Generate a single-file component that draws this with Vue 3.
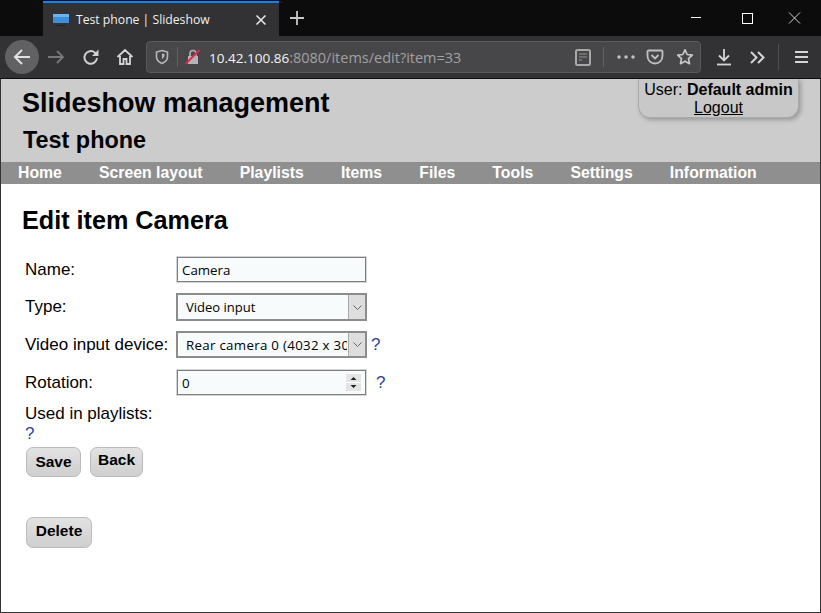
<script setup>
import { ref } from 'vue'

const navItems = ['Home', 'Screen layout', 'Playlists', 'Items', 'Files', 'Tools', 'Settings', 'Information']
const itemName = ref('Camera')
const itemType = ref('Video input')
const device = ref('Rear camera 0 (4032 x 3024)')
const rotation = ref('0')
</script>

<template>
  <div class="window">
    <div class="tabbar">
      <div class="tab">
        <svg class="favicon" width="16" height="14" viewBox="0 0 16 14">
          <rect x="0" y="1" width="16" height="9" fill="#3d8fdc" />
          <rect x="0" y="1" width="16" height="3" fill="#6cb4ee" />
          <rect x="6" y="10" width="4" height="2" fill="#333" />
          <rect x="4" y="12" width="8" height="1" fill="#222" />
        </svg>
        <span class="tab-title">Test phone | Slideshow</span>
        <svg class="tab-close" width="12" height="12" viewBox="0 0 12 12">
          <path d="M1.5 1.5l9 9M10.5 1.5l-9 9" stroke="#e4e4e4" stroke-width="1.6" fill="none" />
        </svg>
      </div>
      <svg class="new-tab" width="16" height="16" viewBox="0 0 16 16">
        <path d="M8 1v14M1 8h14" stroke="#c8c8c8" stroke-width="1.8" fill="none" />
      </svg>
      <div class="win-controls">
        <svg width="48" height="34" viewBox="0 0 48 34"><path d="M16 17.500h10" stroke="#fff" fill="none" /></svg>
        <svg width="48" height="34" viewBox="0 0 48 34"><rect x="19.500" y="13.500" width="10" height="10" stroke="#fff" fill="none" /></svg>
        <svg width="48" height="34" viewBox="0 0 48 34"><path d="M18 12.500l11 11M29 12.500l-11 11" stroke="#d0d0d0" fill="none" /></svg>
      </div>
    </div>

    <div class="toolbar">
      <div class="back-btn">
        <svg width="20" height="20" viewBox="0 0 20 20">
          <path d="M18 10H3M10 3l-7 7 7 7" stroke="#e0e0e0" stroke-width="2" fill="none" />
        </svg>
      </div>
      <svg class="forward" width="18" height="18" viewBox="0 0 18 18">
        <path d="M1 9h15M10 3l6 6-6 6" stroke="#77777a" stroke-width="1.8" fill="none" />
      </svg>
      <svg class="reload" width="18" height="18" viewBox="0 0 18 18">
        <path d="M15 10a6.300 6.300 0 1 1-2-5.200L15 7" stroke="#d0d0d0" stroke-width="2" fill="none" />
        <path d="M16.500 1.500v6.500h-6.500z" fill="#d0d0d0" />
      </svg>
      <svg class="home" width="18" height="18" viewBox="0 0 18 18">
        <path d="M1.500 9L9 2l7.500 7M4 8v8h3.500v-5h3v5H14V8" stroke="#d4d4d4" stroke-width="1.800" fill="none" />
      </svg>

      <div class="urlbar">
        <svg class="shield" width="14" height="16" viewBox="0 0 14 16">
          <path d="M7 1.500l5.500 1.500v4.500c0 3.500-2.500 5.800-5.500 7-3-1.200-5.500-3.500-5.500-7V3z" stroke="#b8b8b8" stroke-width="1.600" fill="none" />
          <path d="M7 4.500v5.500c1.500-.8 2.500-2.200 2.500-4V5z" fill="#b8b8b8" />
        </svg>
        <span class="url-sep"></span>
        <svg class="lock" width="16" height="16" viewBox="0 0 16 16">
          <path d="M3 7h10v8H3z" fill="#b4b4b4" />
          <path d="M5 7V4.500a3 3 0 0 1 6 0V7" stroke="#b4b4b4" stroke-width="1.600" fill="none" />
          <path d="M0.500 15L14.500 1" stroke="#e22850" stroke-width="1.800" fill="none" />
        </svg>
        <span class="url"><span class="url-host">10.42.100.86</span>:8080/items/edit?item=33</span>
        <svg class="reader" width="16" height="17" viewBox="0 0 16 17">
          <rect x="1" y="1" width="14" height="15" rx="1.500" stroke="#a8a8a8" stroke-width="2" fill="none" />
          <path d="M4 5h8M4 8h8M4 11h3" stroke="#7c7c7c" stroke-width="1.500" fill="none" />
        </svg>
        <span class="url-sep right"></span>
        <svg class="dots" width="18" height="4" viewBox="0 0 18 4">
          <circle cx="2" cy="2" r="1.700" fill="#c4c4c4" />
          <circle cx="9" cy="2" r="1.700" fill="#c4c4c4" />
          <circle cx="16" cy="2" r="1.700" fill="#c4c4c4" />
        </svg>
        <svg class="pocket" width="18" height="16" viewBox="0 0 18 16">
          <path d="M2.500 1.500h13a1 1 0 0 1 1 1V7a7.500 7.500 0 0 1-15 0V2.500a1 1 0 0 1 1-1z" stroke="#c0c0c0" stroke-width="1.800" fill="none" />
          <path d="M5.500 6L9 9.500 12.500 6" stroke="#c0c0c0" stroke-width="1.800" fill="none" />
        </svg>
        <svg class="star" width="18" height="18" viewBox="0 0 18 18">
          <path d="M9 1.800l2.200 4.700 5.100.6-3.800 3.500 1 5.100L9 13.200l-4.500 2.500 1-5.100L1.700 7.100l5.100-.6z" stroke="#c8c8c8" stroke-width="1.700" stroke-linejoin="round" fill="none" />
        </svg>
      </div>

      <svg class="download" width="14" height="17" viewBox="0 0 14 17">
        <path d="M7 0v11M2 6.500l5 5 5-5" stroke="#d4d4d4" stroke-width="1.800" fill="none" />
        <path d="M0 15.500h14" stroke="#d4d4d4" stroke-width="1.800" fill="none" />
      </svg>
      <svg class="chevrons" width="15" height="13" viewBox="0 0 15 13">
        <path d="M1 1l5.500 5.500L1 12M8 1l5.500 5.500L8 12" stroke="#d4d4d4" stroke-width="2" fill="none" />
      </svg>
      <span class="tool-sep"></span>
      <svg class="menu" width="13" height="12" viewBox="0 0 13 12">
        <path d="M0 1h13M0 6h13M0 11h13" stroke="#d4d4d4" stroke-width="1.800" fill="none" />
      </svg>
    </div>

    <div class="page">
      <header class="header">
        <h1>Slideshow management</h1>
        <h2>Test phone</h2>
        <div class="user-box">
          User: <b>Default admin</b><br />
          <a href="#">Logout</a>
        </div>
      </header>
      <nav class="nav">
        <a v-for="item in navItems" :key="item" href="#">{{ item }}</a>
      </nav>

      <main class="content">
        <h2 class="edit-title">Edit item Camera</h2>
        <form class="form" @submit.prevent>
          <div class="row">
            <label>Name:</label>
            <input v-model="itemName" class="field" type="text" />
          </div>
          <div class="row">
            <label>Type:</label>
            <div class="select-wrap">
              <select v-model="itemType" class="select tall">
                <option>Video input</option>
              </select>
              <span class="arrow">
                <svg width="9" height="5" viewBox="0 0 9 5"><path d="M.5.500l4 4 4-4" stroke="#666" fill="none" /></svg>
              </span>
            </div>
          </div>
          <div class="row device-row">
            <label>Video input device:</label>
            <div class="select-wrap">
              <select v-model="device" class="select wide-text">
                <option>Rear camera 0 (4032 x 3024)</option>
              </select>
              <span class="arrow">
                <svg width="9" height="5" viewBox="0 0 9 5"><path d="M.5.500l4 4 4-4" stroke="#666" fill="none" /></svg>
              </span>
            </div>
            <a class="help" href="#">?</a>
          </div>
          <div class="row">
            <label>Rotation:</label>
            <div class="select-wrap">
              <input v-model="rotation" class="field" type="text" />
              <span class="spinner">
                <svg width="15" height="17" viewBox="0 0 15 17">
                  <rect width="15" height="17" fill="#e4e4e4" />
                  <path d="M0 8.500h15" stroke="#fff" />
                  <path d="M7.500 3l3 3h-6zM7.500 14l3-3h-6z" fill="#222" />
                </svg>
              </span>
            </div>
            <a class="help rotation-help" href="#">?</a>
          </div>
          <div class="playlists">
            <div>Used in playlists:</div>
            <a class="help plain" href="#">?</a>
          </div>
          <div class="buttons">
            <button class="btn save" type="submit">Save</button>
            <button class="btn back" type="button">Back</button>
          </div>
          <button class="btn delete" type="button">Delete</button>
        </form>
      </main>
    </div>
  </div>
</template>

<style>
html, body {
  margin: 0;
  background: #fff;
}
</style>

<style scoped>
.window {
  width: 821px;
  height: 613px;
  display: flex;
  flex-direction: column;
  overflow: hidden;
  font-family: "Liberation Sans", Arial, sans-serif;
}
.tabbar {
  height: 36px;
  flex: none;
  background: #0c0c0d;
  display: flex;
  align-items: flex-start;
  padding-left: 43px;
}
.tab {
  width: 236px;
  height: 33px;
  margin-top: 1px;
  border-top: 2px solid #0a84ff;
  background: #323234;
  display: flex;
  align-items: center;
}
.favicon {
  margin-left: 10px;
}
.tab-title {
  margin-left: 7px;
  flex: 1;
  color: #f0f0f0;
  font: 12.200px "Open Sans", sans-serif;
}
.tab-close {
  margin-right: 12px;
}
.new-tab {
  margin: 10px 0 0 10px;
}
.win-controls {
  margin-left: auto;
  display: flex;
  margin-right: 2px;
}
.win-controls svg {
  display: block;
}
.toolbar {
  height: 42px;
  flex: none;
  position: relative;
  z-index: 1;
  background: #323234;
  border-bottom: 1px solid #0c0c0d;
  display: flex;
  align-items: center;
  padding-left: 5px;
}
.back-btn {
  width: 34px;
  height: 34px;
  border-radius: 50%;
  background: #616163;
  display: flex;
  align-items: center;
  justify-content: center;
}
.forward {
  margin-left: 8px;
}
.reload {
  margin-left: 17px;
}
.home {
  margin-left: 16px;
}
.urlbar {
  width: 555px;
  height: 32px;
  box-sizing: border-box;
  margin-left: 12px;
  background: #474749;
  border: 1px solid #5a5a5c;
  border-radius: 4px;
  display: flex;
  align-items: center;
}
.shield {
  margin-left: 8px;
}
.url-sep {
  width: 1px;
  height: 20px;
  background: #616163;
  margin-left: 8px;
}
.url-sep.right {
  margin-left: 12px;
}
.lock {
  margin-left: 7px;
}
.url {
  margin-left: 8px;
  flex: 1;
  color: #a0a0a2;
  font: 14.500px "Open Sans", sans-serif;
  white-space: nowrap;
}
.url-host {
  color: #f4f4f4;
  font-size: 13.500px;
}
.dots {
  margin-left: 13px;
}
.pocket {
  margin-left: 11px;
}
.star {
  margin-left: 12px;
  margin-right: 6px;
}
.download {
  margin-left: 16px;
}
.chevrons {
  margin-left: 19px;
}
.tool-sep {
  width: 1px;
  height: 26px;
  background: #505052;
  margin-left: 13px;
}
.menu {
  margin-left: 16px;
}
.page {
  flex: 1;
  position: relative;
  background: #fff;
  border: 1px solid #333;
  border-top: none;
  display: flex;
  flex-direction: column;
  color: #000;
  font-size: 17px;
}
.header {
  height: 83px;
  flex: none;
  background: #ccc;
  padding-left: 21px;
  box-sizing: border-box;
}
.header h1 {
  margin: 0;
  padding-top: 7px;
  font-size: 27px;
  line-height: 35px;
}
.header h2 {
  margin: 0 0 0 1px;
  padding-top: 4px;
  font-size: 23.400px;
  line-height: 30px;
}
.user-box {
  position: absolute;
  top: 0;
  right: 21px;
  width: 161px;
  height: 39px;
  box-sizing: border-box;
  padding-top: 2px;
  font-size: 16px;
  text-align: center;
  line-height: 18px;
  border: 1px solid #aaa;
  border-top: none;
  border-radius: 0 0 12px 12px;
  background: #c8c8c8;
  box-shadow: 2px 2px 4px rgba(0, 0, 0, 0.25);
}
.user-box a {
  color: #000;
}
.nav {
  height: 22px;
  flex: none;
  background: #8f8f8f;
  display: flex;
  gap: 37.100px;
  padding-left: 17px;
  font-size: 15.800px;
  line-height: 22px;
}
.nav a {
  color: #fff;
  font-weight: bold;
  text-decoration: none;
}
.content {
  padding: 0 0 0 21px;
}
.edit-title {
  margin: 0;
  padding-top: 21px;
  font-size: 25.200px;
  line-height: 30px;
}
.form {
  padding: 21px 0 0 3px;
  display: flex;
  flex-direction: column;
}
.row {
  display: flex;
  align-items: center;
  margin-bottom: 10px;
}
.device-row {
  margin-bottom: 11px;
}
.row label {
  width: 151px;
  flex: none;
}
.field {
  width: 189px;
  height: 25px;
  margin: 1px;
  box-sizing: border-box;
  border: 1px solid #808080;
  outline: 1px solid #d4d4d4;
  background: #f7fbfc;
  padding: 0 0 0 4px;
  font: 13.300px "Open Sans", sans-serif;
  color: #000;
  border-radius: 0;
  display: block;
}
.select-wrap {
  position: relative;
}
.select {
  appearance: none;
  display: block;
  width: 191px;
  height: 27px;
  box-sizing: border-box;
  border: 2px solid #8c8c8c;
  background: #f7fbfc;
  border-radius: 0;
  padding: 0 18px 0 8px;
  font: 13px "Open Sans", sans-serif;
  color: #000;
}
.select.tall {
  height: 28px;
}
.select.wide-text {
  font-size: 13.300px;
  letter-spacing: 0.3px;
}
.arrow {
  position: absolute;
  top: 2px;
  bottom: 2px;
  right: 2px;
  width: 17px;
  background: #dedede;
  display: flex;
  align-items: center;
  justify-content: center;
  border-left: 1px solid #a9a9a9;
  box-sizing: border-box;
}
.spinner {
  position: absolute;
  top: 5px;
  right: 6px;
  display: block;
  line-height: 0;
}
.help {
  margin-left: 4px;
  color: #2f3f9f;
  text-decoration: none;
}
.rotation-help {
  margin-left: 9px;
}
.help.plain {
  margin-left: 0;
}
.playlists {
  line-height: 20px;
  margin-top: -2px;
}
.buttons {
  display: flex;
  gap: 9px;
  margin: 3px 0 0 1px;
}
.btn {
  height: 30px;
  box-sizing: border-box;
  border: 1px solid #bbb;
  border-radius: 7px;
  background: linear-gradient(#e2e2e2, #cfcfcf);
  font: bold 15.500px "Liberation Sans", Arial, sans-serif;
  color: #000;
  padding: 0;
}
.save {
  width: 55px;
}
.back {
  width: 53px;
  padding-bottom: 4px;
}
.delete {
  width: 66px;
  height: 31px;
  margin: 40px 0 0 1px;
  padding-bottom: 3px;
}
</style>
